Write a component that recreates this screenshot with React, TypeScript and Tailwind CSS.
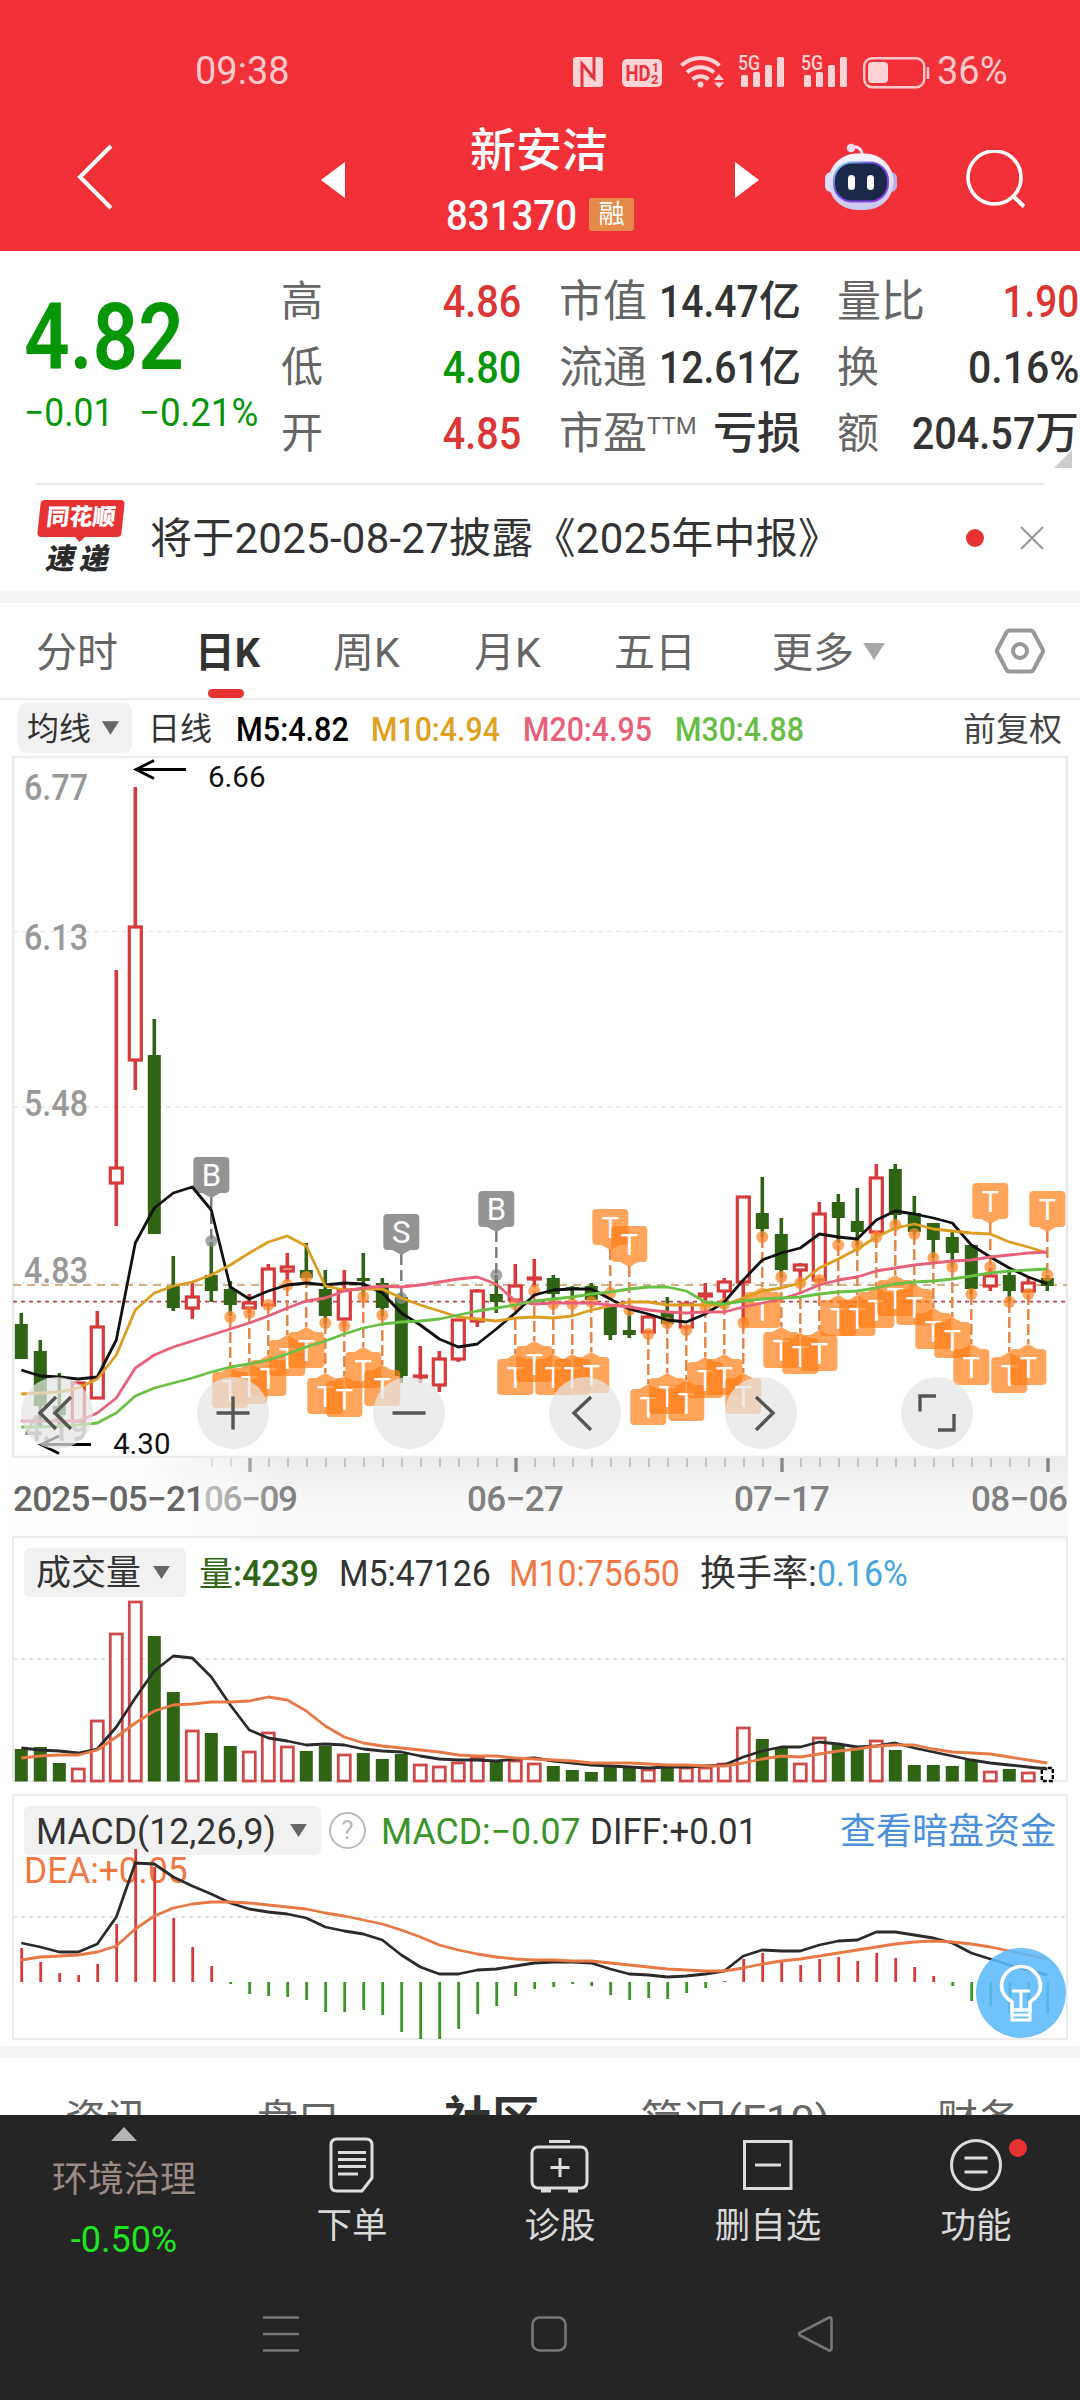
import clsx from "clsx";
import React from "react";

// [direction, high, body top, body bottom, low]
type Candle = ["r" | "g", number, number, number, number];

const candles: Candle[] = [
  ["g", 1313, 1324, 1359, 1359],
  ["g", 1340, 1351, 1406, 1428],
  ["g", 1373, 1406, 1415, 1428],
  ["r", 1382, 1382, 1422, 1422],
  ["r", 1311, 1326, 1399, 1399],
  ["r", 970, 1167, 1184, 1226],
  ["r", 787, 926, 1061, 1090],
  ["g", 1019, 1055, 1234, 1234],
  ["g", 1256, 1286, 1308, 1311],
  ["r", 1283, 1296, 1309, 1319],
  ["g", 1242, 1275, 1291, 1302],
  ["g", 1281, 1289, 1305, 1316],
  ["r", 1294, 1302, 1309, 1313],
  ["r", 1264, 1268, 1306, 1306],
  ["r", 1253, 1266, 1272, 1281],
  ["g", 1243, 1270, 1278, 1278],
  ["g", 1270, 1289, 1316, 1324],
  ["r", 1270, 1289, 1320, 1327],
  ["g", 1253, 1278, 1281, 1297],
  ["g", 1278, 1283, 1308, 1316],
  ["g", 1293, 1297, 1376, 1383],
  ["r", 1346, 1375, 1377, 1383],
  ["r", 1351, 1358, 1386, 1392],
  ["r", 1319, 1319, 1360, 1362],
  ["r", 1289, 1290, 1322, 1327],
  ["g", 1275, 1294, 1302, 1313],
  ["r", 1264, 1285, 1301, 1301],
  ["r", 1259, 1277, 1279, 1287],
  ["g", 1275, 1278, 1294, 1303],
  ["g", 1286, 1287, 1289, 1300],
  ["g", 1283, 1286, 1300, 1300],
  ["g", 1304, 1306, 1335, 1340],
  ["g", 1310, 1330, 1335, 1338],
  ["r", 1315, 1316, 1333, 1333],
  ["g", 1297, 1312, 1324, 1327],
  ["r", 1301, 1303, 1328, 1330],
  ["r", 1283, 1293, 1297, 1303],
  ["r", 1278, 1281, 1292, 1301],
  ["r", 1196, 1196, 1283, 1323],
  ["g", 1177, 1213, 1229, 1237],
  ["g", 1218, 1234, 1270, 1278],
  ["r", 1263, 1264, 1271, 1283],
  ["r", 1202, 1213, 1281, 1281],
  ["g", 1194, 1202, 1218, 1243],
  ["g", 1188, 1221, 1232, 1245],
  ["r", 1164, 1177, 1233, 1236],
  ["g", 1164, 1169, 1215, 1225],
  ["g", 1196, 1213, 1232, 1234],
  ["g", 1223, 1223, 1240, 1258],
  ["g", 1232, 1237, 1253, 1267],
  ["g", 1245, 1245, 1289, 1294],
  ["r", 1268, 1275, 1287, 1291],
  ["g", 1272, 1275, 1291, 1302],
  ["r", 1277, 1282, 1292, 1293],
  ["g", 1275, 1278, 1286, 1291],
];

const ma5 = [
  1370, 1376, 1377, 1379, 1377, 1340, 1243, 1208, 1193, 1187, 1210, 1287, 1299,
  1291, 1285, 1283, 1285, 1283, 1284, 1293, 1313, 1325, 1339, 1347, 1344, 1329,
  1313, 1295, 1290, 1289, 1289, 1299, 1309, 1314, 1320, 1322, 1314, 1302, 1280,
  1260, 1253, 1248, 1234, 1237, 1239, 1220, 1211, 1214, 1218, 1223, 1245, 1257,
  1268, 1277, 1284,
];
const ma10 = [
  1394, 1393, 1392, 1388, 1379, 1355, 1310, 1293, 1286, 1282, 1275, 1265, 1253,
  1242, 1236, 1246, 1286, 1290, 1289, 1289, 1298, 1305, 1311, 1317, 1319, 1321,
  1318, 1317, 1318, 1316, 1310, 1306, 1302, 1302, 1305, 1305, 1305, 1305, 1298,
  1291, 1288, 1283, 1268, 1259, 1249, 1237, 1228, 1224, 1229, 1231, 1233, 1234,
  1242, 1247, 1253,
];
const ma20 = [
  1421, 1421, 1421, 1421, 1413, 1398, 1368, 1355, 1347, 1341, 1335, 1329, 1323,
  1316, 1308, 1301, 1298, 1291, 1288, 1286, 1287, 1285, 1282, 1279, 1277, 1284,
  1301, 1304, 1303, 1303, 1303, 1305, 1307, 1310, 1312, 1313, 1312, 1312, 1307,
  1303, 1299, 1293, 1285, 1280, 1277, 1271, 1268, 1265, 1263, 1261, 1260, 1257,
  1255, 1253, 1252,
];
const ma30 = [
  1427, 1427, 1426, 1425, 1423, 1413, 1396, 1388, 1383, 1378, 1372, 1367, 1364,
  1360, 1354, 1347, 1341, 1334, 1328, 1324, 1322, 1321, 1319, 1315, 1311, 1308,
  1305, 1301, 1299, 1297, 1294, 1292, 1289, 1287, 1287, 1291, 1302, 1304, 1301,
  1299, 1298, 1297, 1294, 1292, 1291, 1288, 1284, 1282, 1281, 1279, 1276, 1273,
  1271, 1270, 1269,
];

// [index, anchor y]
const lowMarks = [
  [11, 1317], [12, 1313], [13, 1305], [14, 1285], [15, 1277], [16, 1323],
  [17, 1326], [18, 1297], [19, 1315], [26, 1304], [27, 1291], [28, 1304],
  [29, 1304], [30, 1302], [33, 1334], [34, 1323], [35, 1330], [36, 1307],
  [37, 1304], [38, 1323], [39, 1237], [40, 1277], [41, 1283], [42, 1280],
  [43, 1245], [44, 1245], [45, 1237], [46, 1225], [47, 1234], [48, 1258],
  [49, 1267], [50, 1294], [52, 1302], [53, 1294],
];
const highMarks: [number, number, string][] = [
  [10, 1241, "B"],
  [20, 1298, "S"],
  [25, 1275, "B"],
  [31, 1293, "T"],
  [32, 1310, "T"],
  [51, 1267, "T"],
  [54, 1275, "T"],
];

const volumes = [
  1749, 1747, 1763, 1768, 1720, 1633, 1601, 1636, 1692, 1730, 1733, 1746, 1751,
  1732, 1746, 1751, 1746, 1754, 1753, 1759, 1754, 1764, 1766, 1762, 1757, 1762,
  1760, 1763, 1766, 1770, 1772, 1767, 1767, 1769, 1768, 1767, 1767, 1763, 1727,
  1739, 1748, 1763, 1737, 1745, 1748, 1740, 1750, 1765, 1765, 1766, 1760, 1771,
  1769, 1772, 1767,
];
const vol5 = [
  1748, 1750, 1751, 1753, 1749, 1727, 1698, 1671, 1656, 1658, 1677, 1705, 1730,
  1738, 1741, 1745, 1744, 1745, 1749, 1751, 1752, 1756, 1759, 1760, 1760, 1761,
  1759, 1758, 1761, 1763, 1765, 1766, 1767, 1768, 1767, 1767, 1766, 1765, 1757,
  1751, 1747, 1747, 1742, 1744, 1747, 1746, 1743, 1748, 1752, 1756, 1760, 1763,
  1765, 1767, 1769,
];
const vol10 = [
  1758, 1756, 1755, 1755, 1750, 1737, 1723, 1711, 1705, 1704, 1702, 1702, 1701,
  1697, 1700, 1711, 1726, 1737, 1743, 1746, 1748, 1750, 1752, 1755, 1756, 1756,
  1758, 1759, 1760, 1761, 1763, 1763, 1763, 1764, 1765, 1765, 1766, 1766, 1763,
  1759, 1756, 1757, 1754, 1751, 1749, 1746, 1745, 1745, 1749, 1752, 1753, 1754,
  1757, 1760, 1763,
];

const macd = [
  1948, 1962, 1973, 1975, 1964, 1924, 1849, 1867, 1918, 1947, 1966, 1984, 1994,
  1996, 1997, 2000, 2012, 2012, 2010, 2015, 2032, 2039, 2039, 2029, 2014, 2006,
  1996, 1989, 1987, 1984, 1986, 1995, 2000, 1998, 1999, 1993, 1988, 1981, 1959,
  1953, 1962, 1965, 1959, 1957, 1961, 1953, 1958, 1967, 1976, 1986, 2001, 2006,
  2013, 2012, 2014,
];
const diff = [
  1943, 1947, 1952, 1952, 1944, 1917, 1863, 1864, 1877, 1886, 1894, 1903, 1909,
  1912, 1914, 1918, 1927, 1931, 1934, 1940, 1955, 1967, 1974, 1974, 1970, 1969,
  1966, 1963, 1962, 1962, 1963, 1969, 1974, 1975, 1977, 1976, 1974, 1971, 1956,
  1950, 1951, 1951, 1945, 1941, 1940, 1932, 1932, 1935, 1938, 1943, 1953, 1959,
  1965, 1970, 1975,
];
const dea = [
  1960, 1957, 1956, 1955, 1952, 1946, 1929, 1916, 1908, 1904, 1902, 1902, 1903,
  1905, 1907, 1909, 1913, 1916, 1920, 1924, 1930, 1937, 1945, 1950, 1954, 1957,
  1959, 1960, 1960, 1961, 1961, 1963, 1965, 1967, 1969, 1970, 1971, 1971, 1968,
  1964, 1961, 1959, 1956, 1953, 1950, 1947, 1944, 1942, 1941, 1942, 1944, 1947,
  1951, 1955, 1959,
];

const RED = "#d63a3a";
const GREEN = "#2f6414";

const px = (i: number) => 21.3 + i * 19;
const toPoints = (ys: number[]) => ys.map((y, i) => `${px(i)},${y}`).join(" ");

function Line({ ys, color, width = 2.8 }: { ys: number[]; color: string; width?: number }) {
  return (
    <polyline
      points={toPoints(ys)}
      fill="none"
      stroke={color}
      strokeWidth={width}
      strokeLinejoin="round"
    />
  );
}

function Num({ className, children }: { className?: string; children: React.ReactNode }) {
  return (
    <span className={clsx("inline-block whitespace-nowrap", className)}>{children}</span>
  );
}

function Caret({ className }: { className?: string }) {
  return (
    <svg viewBox="0 0 20 14" className={clsx("shrink-0", className)}>
      <path d="M1 0h18L10 14z" fill="currentColor" />
    </svg>
  );
}

function Signal() {
  return (
    <svg viewBox="0 0 46 34" className="w-[46px] h-[34px] overflow-visible">
      <text
        x="0"
        y="15"
        fontSize="20"
        fontWeight="500"
        textLength="22"
        lengthAdjust="spacingAndGlyphs"
        fill="#fdd3d5"
      >
        5G
      </text>
      <g fill="#fdd3d5">
        <rect x="3" y="20" width="7" height="12" rx="1.5" />
        <rect x="15" y="17" width="7" height="15" rx="1.5" />
        <rect x="27" y="10" width="7" height="22" rx="1.5" />
        <rect x="39" y="2" width="7" height="30" rx="1.5" />
      </g>
    </svg>
  );
}

function StatusBar() {
  return (
    <div className="h-[112px] pt-[31px] flex items-center text-[38px] text-[#fdc9cc]">
      <Num className="w-[92px] ml-[195px] origin-left">09:38</Num>

      <svg viewBox="0 0 30 34" className="w-[30px] h-[34px] ml-[286px]">
        <rect y="2" width="30" height="30" rx="3" fill="#fdd3d5" />
        <path
          d="M9 32V9l12 14V2M9 9l4 4M21 23l-4-3"
          fill="none"
          stroke="#e0353c"
          strokeWidth="3"
        />
      </svg>

      <svg viewBox="0 0 40 34" className="w-[40px] h-[34px] ml-[19px]">
        <rect y="4" width="40" height="28" rx="5" fill="#fdd3d5" />
        <g fill="#ef3038" fontWeight="700">
          <text x="3.5" y="26" fontSize="21.5" textLength="25" lengthAdjust="spacingAndGlyphs">
            HD
          </text>
          <text x="30" y="17" fontSize="12">1</text>
          <text x="29" y="29" fontSize="13">2</text>
        </g>
      </svg>

      <svg viewBox="0 0 44 34" className="w-[44px] h-[34px] ml-[18px]">
        <g fill="none" stroke="#fdd3d5" strokeWidth="4">
          <path d="M1.5 10.500a28 28 0 0 1 38 0" />
          <path d="M7 17.500a20 20 0 0 1 27 0" />
          <path d="M12.500 24.200a12 12 0 0 1 16 0" />
        </g>
        <circle cx="20.500" cy="29.500" r="3" fill="#fdd3d5" />
        <path d="M34 25l5-6 5 6zM34 27.500h10l-5 5.500z" fill="#fdd3d5" />
      </svg>

      <div className="ml-[14px] flex gap-[17px]">
        <Signal />
        <Signal />
      </div>

      <svg viewBox="0 0 68 34" className="w-[68px] h-[34px] ml-[16px]">
        <rect x="1.200" y="3.200" width="60" height="29" rx="8" fill="none" stroke="#fdc9cc" strokeWidth="2.400" />
        <rect x="5" y="7" width="20" height="21" rx="4" fill="#fdd3d5" />
        <path d="M65 12v12" stroke="#fdc9cc" strokeWidth="2.500" />
      </svg>
      <Num className="ml-[6px] origin-left">36%</Num>
    </div>
  );
}

function Robot() {
  return (
    <svg viewBox="0 0 72 68" className="w-[72px] h-[68px] ml-[66px] mb-[10px]">
      <defs>
        <linearGradient id="shell" x1="0" y1="0" x2="0" y2="1">
          <stop offset="0" stopColor="#fbf5ff" />
          <stop offset="1" stopColor="#c9c5f0" />
        </linearGradient>
        <linearGradient id="visor" x1="0" y1="0" x2="1" y2="1">
          <stop offset="0" stopColor="#7be0f5" />
          <stop offset="0.400" stopColor="#6b4be0" />
          <stop offset="1" stopColor="#8d3fe0" />
        </linearGradient>
      </defs>
      <path d="M27 4c6-1 10 2 10 8" fill="none" stroke="#f0e4fa" strokeWidth="3" />
      <circle cx="26" cy="5" r="4.300" fill="#efd9f3" />
      <rect x="0" y="29" width="12" height="20" rx="6" fill="#e3def8" />
      <rect x="60" y="29" width="12" height="20" rx="6" fill="#b9b0e6" />
      <rect x="3.500" y="10.500" width="65" height="56.500" rx="28" fill="url(#shell)" />
      <rect x="9" y="19.500" width="54" height="39" rx="18" fill="#1c2849" stroke="url(#visor)" strokeWidth="2" />
      <rect x="23" y="32" width="7" height="15" rx="3.500" fill="#fff" />
      <rect x="42" y="32" width="7" height="15" rx="3.500" fill="#fff" />
    </svg>
  );
}

function Header() {
  return (
    <div className="h-[251px] bg-[#f23038] text-white">
      <StatusBar />

      <div className="h-[139px] flex items-center">
        <svg viewBox="0 0 36 66" className="w-[36px] h-[66px] ml-[77px] mb-[10px]">
          <path d="M34 2L3 33l31 31" fill="none" stroke="#fff" strokeWidth="4" />
        </svg>
        <svg viewBox="0 0 24 36" className="w-[24px] h-[36px] ml-[208px] mb-[4px]">
          <path d="M24 0v36L0 18z" fill="#fff" />
        </svg>

        <div className="w-[390px] flex flex-col items-center">
          <h1 className="text-[46px] leading-[64px] font-medium -ml-[2px]">新安洁</h1>
          <div className="flex items-center h-[64px] pt-[2px]">
            <Num className="text-[42px] leading-[64px] font-medium w-[143px] pt-[2px] origin-left scale-x-[0.915]">
              831370
            </Num>
            <span className="w-[45px] h-[33px] rounded-[3px] bg-[#e68a4a] text-[26px] leading-[32px] text-center">
              融
            </span>
          </div>
        </div>

        <svg viewBox="0 0 24 36" className="w-[24px] h-[36px] mb-[4px]">
          <path d="M0 0v36l24-18z" fill="#fff" />
        </svg>
        <Robot />
        <svg viewBox="0 0 60 60" className="w-[60px] h-[60px] ml-[69px] mb-[4px]">
          <circle cx="28.500" cy="27.500" r="26.500" fill="none" stroke="#fff" strokeWidth="3.600" />
          <path d="M47.500 46.500l10.500 10" stroke="#fff" strokeWidth="4" />
        </svg>
      </div>
    </div>
  );
}

const value = "text-[45px] font-medium origin-right";

function Quote() {
  return (
    <div className="relative h-[232px] flex text-[#333]">
      <div className="w-[281px] pl-[24px] pt-[42px] text-[#079607]">
        <div className="h-[90px] text-[92px] leading-[90px] font-semibold">
          <Num className="origin-left scale-x-[0.87]">4.82</Num>
        </div>
        <div className="h-[60px] flex text-[39px] leading-[60px]">
          <span className="w-[115px]">
            <Num className="origin-left scale-x-[0.91]">−0.01</Num>
          </span>
          <Num className="origin-left scale-x-[0.94]">−0.21%</Num>
        </div>
      </div>

      <div className="pt-[18px] flex gap-[38px] text-[42px] leading-[66px]">
        <div className="w-[240px]">
          <div className="h-[66px] flex justify-between">
            <span className="text-[#666]">高</span>
            <Num className={clsx(value, "scale-x-[0.88] text-[#dc3535]")}>4.86</Num>
          </div>
          <div className="h-[66px] flex justify-between">
            <span className="text-[#666]">低</span>
            <Num className={clsx(value, "scale-x-[0.88] text-[#079607]")}>4.80</Num>
          </div>
          <div className="h-[66px] flex justify-between">
            <span className="text-[#666]">开</span>
            <Num className={clsx(value, "scale-x-[0.88] text-[#dc3535]")}>4.85</Num>
          </div>
        </div>

        <div className="w-[242px]">
          <div className="h-[66px] flex">
            <span className="text-[44px] text-[#666]">市值</span>
            <span className="flex-1 flex justify-end font-medium">
              <Num className={clsx(value, "-ml-[30px] scale-x-[0.87]")}>14.47</Num>亿
            </span>
          </div>
          <div className="h-[66px] flex">
            <span className="text-[44px] text-[#666]">流通</span>
            <span className="flex-1 flex justify-end font-medium">
              <Num className={clsx(value, "-ml-[30px] scale-x-[0.87]")}>12.61</Num>亿
            </span>
          </div>
          <div className="h-[66px] flex">
            <span className="text-[44px] text-[#666]">市盈</span>
            <span className="text-[24px] leading-[51px] text-[#666]">TTM</span>
            <span className="flex-1 text-right font-medium text-[44px]">亏损</span>
          </div>
        </div>

        <div className="w-[242px] -ml-[2px]">
          <div className="h-[66px] flex justify-between">
            <span className="text-[44px] text-[#666]">量比</span>
            <Num className={clsx(value, "scale-x-[0.86] text-[#dc3535]")}>1.90</Num>
          </div>
          <div className="h-[66px] flex justify-between">
            <span className="text-[#666]">换</span>
            <Num className={clsx(value, "scale-x-[0.91]")}>0.16%</Num>
          </div>
          <div className="h-[66px] flex">
            <span className="text-[#666]">额</span>
            <span className="flex-1 flex justify-end font-medium">
              <Num className={clsx(value, "scale-x-[0.88]")}>204.57</Num>
              <span className="text-[44px]">万</span>
            </span>
          </div>
        </div>
      </div>

      <svg viewBox="0 0 18 18" className="absolute right-[8px] bottom-[15px] w-[18px] h-[18px]">
        <path d="M18 0v18H0z" fill="#ccc" />
      </svg>
    </div>
  );
}

function News() {
  return (
    <div className="h-[108px] flex items-center mx-[36px] border-t-2 border-[#ececec]">
      <div className="w-[90px] h-[76px] flex flex-col items-center">
        <div className="relative w-[84px] h-[37px] -skew-x-6 rounded-[4px] bg-[#e63232] text-white text-[23px] leading-[36px] text-center font-black">
          同花顺
          <svg viewBox="0 0 12 6" className="absolute left-[37px] -bottom-[5px] w-[12px] h-[6px]">
            <path d="M0 0h12L6 6z" fill="#e63232" />
          </svg>
        </div>
        <div className="-skew-x-12 mt-[5px] text-[29px] leading-[34px] font-black text-[#2b2b2b] tracking-[5px]">
          速递
        </div>
      </div>
      <p className="ml-[24px] pt-[2px] text-[42px] leading-[60px] tracking-[0.25px] text-[#333] whitespace-nowrap">
        将于2025-08-27披露《2025年中报》
      </p>
      <span className="ml-auto size-[18px] rounded-full bg-[#e63232]" />
      <svg viewBox="0 0 24 24" className="w-[24px] h-[24px] ml-[36px]">
        <path d="M1 1l22 22M23 1L1 23" stroke="#999" strokeWidth="2.200" />
      </svg>
    </div>
  );
}

function PeriodTabs() {
  return (
    <div className="h-[97px] border-b-2 border-[#ebebeb] flex text-[41px] leading-[101px] text-[#666]">
      <span className="w-[162px] pl-[36px]">分时</span>
      <span className="relative w-[135px] pl-[33px] font-bold text-[#333]">
        <Num className="origin-left scale-x-[0.97]">日K</Num>
        <span className="absolute left-[46px] bottom-0 w-[36px] h-[9px] rounded-full bg-[#e63232]" />
      </span>
      <span className="w-[141px] pl-[36px]">周K</span>
      <span className="w-[140px] pl-[36px]">月K</span>
      <span className="w-[158px] pl-[36px]">五日</span>
      <span className="flex pl-[36px]">
        更多
        <Caret className="w-[24px] h-[19px] ml-[8px] mt-[39px] text-[#a8a8a8]" />
      </span>
      <svg viewBox="0 0 50 46" className="w-[50px] h-[46px] ml-auto mr-[35px] mt-[25px]">
        <path
          d="M14.500 2.500h21q2 0 3 1.800l9 17q1 1.700 0 3.400l-9 17q-1 1.800-3 1.800h-21q-2 0-3-1.800l-9-17q-1-1.700 0-3.400l9-17q1-1.800 3-1.800z"
          fill="none"
          stroke="#999"
          strokeWidth="4"
        />
        <circle cx="25" cy="23" r="7" fill="none" stroke="#999" strokeWidth="4" />
      </svg>
    </div>
  );
}

function MaLegend() {
  return (
    <div className="h-[56px] flex items-center text-[34px] leading-[53px]">
      <span className="ml-[18px] w-[114px] h-[50px] rounded-[8px] bg-[#f1f1f1] flex items-center pl-[9px] text-[32px] text-[#333]">
        <span className="pt-[3px]">均线</span>
        <Caret className="w-[19px] h-[14px] ml-[10px] text-[#666]" />
      </span>
      <span className="ml-[16px] pt-[3px] w-[88px] text-[32px] text-[#333]">日线</span>
      <span className="w-[135px] pt-[3px] text-black">
        <Num className="origin-left scale-x-[0.9] font-medium">M5:4.82</Num>
      </span>
      <span className="w-[152px] pt-[3px] text-[#e0a020]">
        <Num className="origin-left scale-x-[0.89] font-medium">M10:4.94</Num>
      </span>
      <span className="w-[152px] pt-[3px] text-[#e8607a]">
        <Num className="origin-left scale-x-[0.89] font-medium">M20:4.95</Num>
      </span>
      <span className="pt-[3px] text-[#67bd45]">
        <Num className="origin-left scale-x-[0.89] font-medium">M30:4.88</Num>
      </span>
      <span className="ml-auto mr-[18px] pt-[3px] text-[33px] text-[#444]">前复权</span>
    </div>
  );
}

function Mark({ i, top, text, color, up }: { i: number; top: number; text: string; color: string; up?: boolean }) {
  const x = px(i);
  const tip = up
    ? `M${x - 9} ${top}l9-5 9 5z`
    : `M${x - 9} ${top + 36}l9 5 9-5z`;
  return (
    <g>
      <g fill={color} opacity={text === "T" ? 0.7 : 1}>
        <rect x={x - 18} y={top} width="36" height="36" rx="4" />
        <path d={tip} />
      </g>
      <text
        x={x}
        y={top + 28.5}
        fontSize={text === "T" ? 29 : 31}
        textAnchor="middle"
        fill="#fff"
      >
        {text}
      </text>
    </g>
  );
}

const priceLabels: [string, number][] = [
  ["6.77", 800],
  ["6.13", 950],
  ["5.48", 1116],
  ["4.83", 1283],
  ["4.19", 1441],
];

function PriceChart() {
  return (
    <svg viewBox="0 756 1080 780" className="block w-[1080px] h-[780px]">
      <defs>
        <linearGradient id="strip" x1="0" y1="0" x2="0" y2="1">
          <stop offset="0" stopColor="#ebebeb" />
          <stop offset="0.700" stopColor="#fafafa" />
        </linearGradient>
        <linearGradient id="fade" x1="0" y1="0" x2="1" y2="0">
          <stop offset="0" stopColor="#fff" />
          <stop offset="0.450" stopColor="#fff" stopOpacity="0.950" />
          <stop offset="1" stopColor="#fff" stopOpacity="0" />
        </linearGradient>
      </defs>

      <rect x="13" y="757" width="1054" height="700" fill="none" stroke="#ebebeb" strokeWidth="2.500" />
      <g stroke="#e8e8e8" strokeWidth="1.500" strokeDasharray="5 4">
        <path d="M13 931.500h1054M13 1107h1054M13 1283h1054" />
      </g>
      <path d="M13 1285h1054" stroke="#c09a5c" strokeWidth="1.600" strokeDasharray="8 6" />
      <path d="M13 1301.700h1054" stroke="#b8424a" strokeWidth="1.800" strokeDasharray="4 4" />

      {priceLabels.map(([t, y]) => (
        <text key={t} x="24" y={y} fontSize="37.500" fontWeight="500" fill="#999" textLength="64" lengthAdjust="spacingAndGlyphs">
          {t}
        </text>
      ))}

      {candles.map(([dir, high, top, bottom, low], i) => {
        const x = px(i);
        const color = dir === "r" ? RED : GREEN;
        return (
          <g key={i}>
            <path d={`M${x} ${high}V${top}M${x} ${bottom}V${low}`} stroke={color} strokeWidth="3.600" />
            {dir === "g" ? (
              <rect x={x - 6.5} y={top} width="13" height={Math.max(bottom - top, 3)} fill={color} />
            ) : (
              <rect
                x={x - 6}
                y={top + 1}
                width="12"
                height={Math.max(bottom - top - 2, 1)}
                fill="#fff"
                stroke={color}
                strokeWidth="3.200"
              />
            )}
          </g>
        );
      })}

      {lowMarks.map(([i, y]) => (
        <g key={i}>
          <circle cx={px(i)} cy={y} r="6" fill="#ff8a2b" opacity="0.750" />
          <path d={`M${px(i)} ${y}v50`} stroke="#e58242" strokeWidth="2.400" strokeDasharray="11 4" />
        </g>
      ))}
      {highMarks.map(([i, y, t]) => (
        <g key={i}>
          <circle cx={px(i)} cy={y} r="6" fill={t === "T" ? "#ff8a2b" : "#8a8a8a"} opacity="0.750" />
          <path
            d={`M${px(i)} ${y - 44}v42`}
            stroke={t === "T" ? "#e58242" : "#777"}
            strokeWidth="2.400"
            strokeDasharray="11 5"
          />
        </g>
      ))}

      {lowMarks.map(([i, y]) => (
        <Mark key={i} i={i} top={y + 55} text="T" color="#ff7e16" up />
      ))}
      {highMarks.map(([i, y, t]) => (
        <Mark key={i} i={i} top={y - 84} text={t} color={t === "T" ? "#ff7e16" : "#949494"} />
      ))}

      <Line ys={ma5} color="#111" />
      <Line ys={ma10} color="#dd9d20" />
      <Line ys={ma20} color="#e8607a" />
      <Line ys={ma30} color="#6abf45" />

      <g fill="none" stroke="#000" strokeWidth="2.800">
        <path d="M186 769.500h-50M154 760.500l-18 9 18 9" />
        <path d="M91 1444.500H41M59 1436l-18 8.500 18 9" />
      </g>
      <g fontSize="29.500" fill="#111">
        <text x="208" y="787">6.66</text>
        <text x="113" y="1453.500">4.30</text>
      </g>

      {/* round tool buttons */}
      {[57, 233, 409, 585, 761, 937].map((x) => (
        <circle key={x} cx={x} cy="1413" r="36" fill="#e4e4e4" opacity="0.720" />
      ))}
      <g fill="none" stroke="#555" strokeWidth="3.400">
        <path d="M56 1397l-16 16 16 16M71 1397l-16 16 16 16" />
        <path d="M216.500 1413h33M233 1396.500v33" />
        <path d="M392.500 1413h33" />
        <path d="M591 1397l-17 16 17 17" />
        <path d="M756 1397l17 16-17 17" />
        <path d="M920 1411.500V1396h16M938 1430h16v-16" />
      </g>

      <rect x="12" y="1458" width="1056" height="78" fill="url(#strip)" />
      {Array.from({ length: 45 }, (_, k) => k + 10).map((i) => {
        const major = (i - 12) % 14 === 0;
        return (
          <path
            key={i}
            d={`M${px(i) + 0.7} 1458v${major ? 14 : 9}`}
            stroke={major ? "#888" : "#c4c4c4"}
            strokeWidth={major ? 3.4 : 2}
          />
        );
      })}
      <g fontSize="35" fontWeight="500" fill="#808080">
        <text x="204" y="1511" textLength="94">06−09</text>
        <rect x="0" y="1458" width="290" height="78" fill="url(#fade)" />
        <text x="467" y="1511" textLength="97">06−27</text>
        <text x="734" y="1511" textLength="96">07−17</text>
        <text x="971" y="1511" textLength="97">08−06</text>
        <text x="13" y="1511" textLength="192" fill="#666">2025−05−21</text>
      </g>
    </svg>
  );
}

function VolumePanel() {
  return (
    <div className="relative h-[258px]">
      <svg viewBox="0 1536 1080 258" className="absolute inset-0 w-[1080px] h-[258px]">
        <rect x="240" y="1536" width="827" height="5" fill="#fafafa" />
        <rect x="13" y="1537" width="1054" height="244" fill="none" stroke="#ebebeb" strokeWidth="2.200" />
        <path d="M13 1659h1054" stroke="#e8e8e8" strokeWidth="1.800" strokeDasharray="4 4" />
        {volumes.map((y, i) => {
          if (i === 54) {
            return (
              <rect
                key={i}
                x={px(i) - 5.5}
                y={y + 1}
                width="11"
                height={1780 - y}
                fill="#fff"
                stroke="#000"
                strokeWidth="2.400"
                strokeDasharray="4 2"
              />
            );
          }
          return candles[i][0] === "g" ? (
            <rect key={i} x={px(i) - 6.5} y={y} width="13" height={1781.5 - y} fill={GREEN} />
          ) : (
            <rect
              key={i}
              x={px(i) - 6}
              y={y + 1}
              width="12"
              height={1780 - y}
              fill="#fff"
              stroke="#cf4a4a"
              strokeWidth="2.800"
            />
          );
        })}
        <Line ys={vol5} color="#2b2b2b" />
        <Line ys={vol10} color="#e87845" />
      </svg>

      <div className="relative pt-[12px] pl-[24px] flex text-[36px] leading-[52px] text-[#333]">
        <span className="w-[162px] h-[49px] rounded-[6px] bg-[#f1f1f1] flex pl-[12px] text-[35px]">
          成交量
          <Caret className="w-[19px] h-[13px] ml-[11px] mt-[18px] text-[#666]" />
        </span>
        <span className="ml-[13px] w-[140px] flex text-[#2f6414]">
          <span className="text-[34px]">量</span>
          <Num className="origin-left scale-x-[0.94] font-medium">:4239</Num>
        </span>
        <span className="w-[170px]">
          <Num className="origin-left scale-x-[0.94]">M5:47126</Num>
        </span>
        <span className="w-[191px] text-[#f07845]">
          <Num className="origin-left scale-x-[0.94]">M10:75650</Num>
        </span>
        <span className="text-[36px]">换手率:</span>
        <Num className="origin-left scale-x-[0.94] text-[#45a5e0]">0.16%</Num>
      </div>
    </div>
  );
}

function MacdPanel() {
  return (
    <div className="relative h-[252px]">
      <svg viewBox="0 1794 1080 252" className="absolute inset-0 w-[1080px] h-[252px]">
        <rect x="13" y="1795" width="1054" height="244" fill="none" stroke="#ebebeb" strokeWidth="2.200" />
        <path d="M13 1917h1054" stroke="#e8e8e8" strokeWidth="1.800" strokeDasharray="4 4" />
      </svg>

      <div className="relative h-[61px] pt-[12px] pl-[24px] flex text-[36px] leading-[52px] text-[#333]">
        <span className="w-[297px] h-[49px] rounded-[6px] bg-[#f1f1f1] flex pl-[12px]">
          <span className="w-[253px]">
            <Num className="origin-left scale-x-[0.99]">MACD(12,26,9)</Num>
          </span>
          <Caret className="w-[19px] h-[13px] mt-[18px] text-[#666]" />
        </span>
        <span className="mt-[6px] ml-[8px] size-[37px] rounded-full border-2 border-[#bbb] text-[26px] leading-[33px] text-center text-[#bbb]">
          ?
        </span>
        <span className="ml-[15px] w-[209px] text-[#3a9427]">
          <Num className="origin-left scale-x-[0.99]">MACD:−0.07</Num>
        </span>
        <Num className="origin-left scale-x-[0.97]">DIFF:+0.01</Num>
        <span className="ml-auto mr-[24px] text-[36px] text-[#4a90dd]">查看暗盘资金</span>
      </div>
      <div className="relative pl-[24px] text-[36px] leading-[33px] text-[#f07845]">
        <Num className="origin-left scale-x-[0.98]">DEA:+0.05</Num>
      </div>

      <svg viewBox="0 1794 1080 252" className="absolute inset-0 w-[1080px] h-[252px]">
        {macd.map((y, i) => (
          <path
            key={i}
            d={`M${px(i) + 0.4} 1982V${y}`}
            stroke={y < 1982 ? "#d63a3a" : "#3a9427"}
            strokeWidth="2.800"
          />
        ))}
        <Line ys={diff} color="#2b2b2b" />
        <Line ys={dea} color="#e87845" />
        <circle cx="1021" cy="1993" r="45" fill="#5cbafc" opacity="0.880" />
        <g fill="none" stroke="#fff" strokeWidth="3.600">
          <path d="M1012 2010v-8c-6-4-10.500-9-10.500-16a19.500 19.500 0 0 1 39 0c0 7-4.500 12-10.500 16v8z" />
          <path d="M1012 1991h18M1021 1991v18M1012 2010v10h18v-10M1012 2015h18" strokeWidth="3" />
        </g>
      </svg>
    </div>
  );
}

function InfoTabs() {
  return (
    <div className="h-[57px] overflow-hidden flex text-[41px] leading-[124px] text-[#666]">
      <span className="w-[192px] pl-[65px]">资讯</span>
      <span className="w-[189px] pl-[65px]">盘口</span>
      <span className="w-[223px] pl-[63px] text-[48px] font-bold text-[#333]">社区</span>
      <span className="w-[296px] pl-[36px]">
        <Num className="origin-left scale-x-[1.06]">简况(F10)</Num>
      </span>
      <span className="pl-[37px]">财务</span>
    </div>
  );
}

const actions = [
  {
    label: "下单",
    icon: (
      <g>
        <path d="M10 2h29q6 0 6 6v33l-10 13H10q-6 0-6-6V8q0-6 6-6z" />
        <path d="M11 15.500h28M11 22.500h28M11 29.500h28M11 37h20" />
      </g>
    ),
  },
  {
    label: "诊股",
    icon: (
      <g>
        <rect x="-3" y="10" width="55" height="41" rx="6" />
        <path d="M14 4.500h21M25 21v19M15.500 30.500h19" />
        <path d="M6 53.500h10M33 53.500h10" strokeWidth="4" />
      </g>
    ),
  },
  {
    label: "删自选",
    icon: (
      <g>
        <rect x="1.500" y="4.500" width="46.500" height="47" />
        <path d="M12 28h26" />
      </g>
    ),
  },
  {
    label: "功能",
    icon: (
      <g>
        <circle cx="25" cy="28" r="24.500" />
        <path d="M13.500 21h23M13.500 35h23" />
      </g>
    ),
  },
];

function BottomBar() {
  return (
    <div className="h-[285px] bg-[#252525] text-[#d8d8d8]">
      <div className="h-[165px] flex">
        <div className="w-[248px] flex flex-col items-center text-[36px]">
          <svg viewBox="0 0 26 14" className="w-[26px] h-[14px] mt-[12px]">
            <path d="M13 0l13 14H0z" fill="#b5b5b5" />
          </svg>
          <span className="mt-[13px] h-[52px] leading-[52px] text-[#9c8a84]">环境治理</span>
          <span className="mt-[8px] h-[52px] leading-[52px] text-[#20e620]">-0.50%</span>
        </div>
        {actions.map((a) => (
          <div key={a.label} className="relative w-[208px] flex flex-col items-center">
            <svg
              viewBox="0 0 50 56"
              className="w-[50px] h-[56px] mt-[22px] overflow-visible"
              fill="none"
              stroke="#dcdcdc"
              strokeWidth="3"
            >
              {a.icon}
            </svg>
            <span className="mt-[7px] text-[35.5px] leading-[52px]">{a.label}</span>
            {a.label === "功能" && (
              <span className="absolute left-[137px] top-[24px] size-[18px] rounded-full bg-[#e63232]" />
            )}
          </div>
        ))}
      </div>

      <div className="h-[108px] flex items-center">
        <svg viewBox="0 0 36 36" className="w-[36px] h-[36px] ml-[263px]">
          <path d="M0 1.500h36M0 18h36M0 34.500h36" stroke="#777" strokeWidth="2.600" />
        </svg>
        <svg viewBox="0 0 36 36" className="w-[36px] h-[36px] ml-[232px]">
          <rect x="1.500" y="1.500" width="33" height="33" rx="7" fill="none" stroke="#777" strokeWidth="2.600" />
        </svg>
        <svg viewBox="0 0 36 36" className="w-[36px] h-[36px] ml-[230px]">
          <path
            d="M32 1.500q2.500-.5 2.500 2v29q0 2.500-2.500 2L3 19.500q-2-1.500 0-3z"
            fill="none"
            stroke="#777"
            strokeWidth="2.600"
          />
        </svg>
      </div>
    </div>
  );
}

export default function App() {
  return (
    <div className="w-[1080px] h-[2400px] overflow-hidden bg-white [font-family:Roboto,'Noto_Sans_CJK_SC',sans-serif]">
      <Header />
      <Quote />
      <News />
      <div className="h-[12px] bg-[#f4f4f4]" />
      <PeriodTabs />
      <MaLegend />
      <PriceChart />
      <VolumePanel />
      <MacdPanel />
      <div className="h-[12px] bg-[#f4f4f4]" />
      <InfoTabs />
      <BottomBar />
    </div>
  );
}
